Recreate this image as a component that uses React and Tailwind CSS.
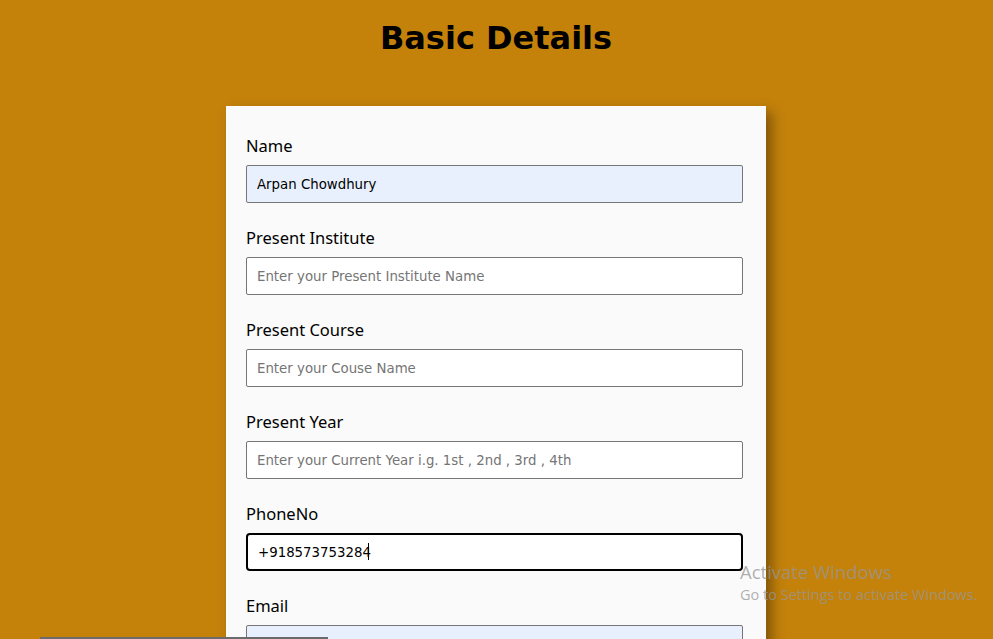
import React from 'react';

const fields = [
  { label: 'Name', value: 'Arpan Chowdhury', autofill: true },
  { label: 'Present Institute', placeholder: 'Enter your Present Institute Name' },
  { label: 'Present Course', placeholder: 'Enter your Couse Name' },
  { label: 'Present Year', placeholder: 'Enter your Current Year i.g. 1st , 2nd , 3rd , 4th' },
  { label: 'PhoneNo', value: '+918573753284', focused: true },
  { label: 'Email', value: '', autofill: true },
];

function Field({ field }) {
  let inputCls =
    "block w-full h-[38px] px-[10px] text-[13.33px] text-black placeholder:text-[#757575] outline-none font-['DejaVu_Sans',sans-serif] ";
  if (field.focused) {
    inputCls += 'border-2 border-black rounded-[4px] bg-white px-[9px] caret-black';
  } else if (field.autofill) {
    inputCls += 'border border-[#767676] rounded-[2px] bg-[#e8f0fe]';
  } else {
    inputCls += 'border border-[#767676] rounded-[2px] bg-white';
  }
  return (
    <div className="flex flex-col gap-2">
      <label className="text-[16.5px] leading-[22px] text-black">{field.label}</label>
      <div className="relative">
        <input
          className={inputCls}
          defaultValue={field.value}
          placeholder={field.placeholder}
          readOnly
        />
        {field.focused && (
          <span className="absolute left-[122px] top-[10px] w-px h-[17px] bg-black" />
        )}
      </div>
    </div>
  );
}

export default function App() {
  return (
    <div className="relative min-h-screen bg-[#c4820b] font-['Noto_Sans',sans-serif] overflow-hidden pr-px">
      <h1 className="text-center text-[32px] font-bold leading-[38px] pt-[19px] text-black font-['DejaVu_Sans',sans-serif]">
        Basic Details
      </h1>
      <div className="flex justify-center mt-[49px]">
        <div className="w-[540px] bg-[#fafafa] pl-5 pr-[23px] pt-[29px] pb-6 shadow-[6px_6px_12px_rgba(0,0,0,0.35)] flex flex-col gap-6">
          {fields.map((f) => (
            <Field key={f.label} field={f} />
          ))}
        </div>
      </div>

      {/* windows watermark */}
      <div className="absolute left-[740px] top-[559px] text-[rgba(150,150,150,0.75)] font-['Open_Sans',sans-serif] pointer-events-none">
        <div className="text-[18.5px] leading-[26px]">Activate Windows</div>
        <div className="text-[14.5px] leading-[20px]">Go to Settings to activate Windows.</div>
      </div>
      <div className="absolute left-[40px] top-[637px] w-[288px] h-[2px] bg-[#6b6b6b]" />
    </div>
  );
}
